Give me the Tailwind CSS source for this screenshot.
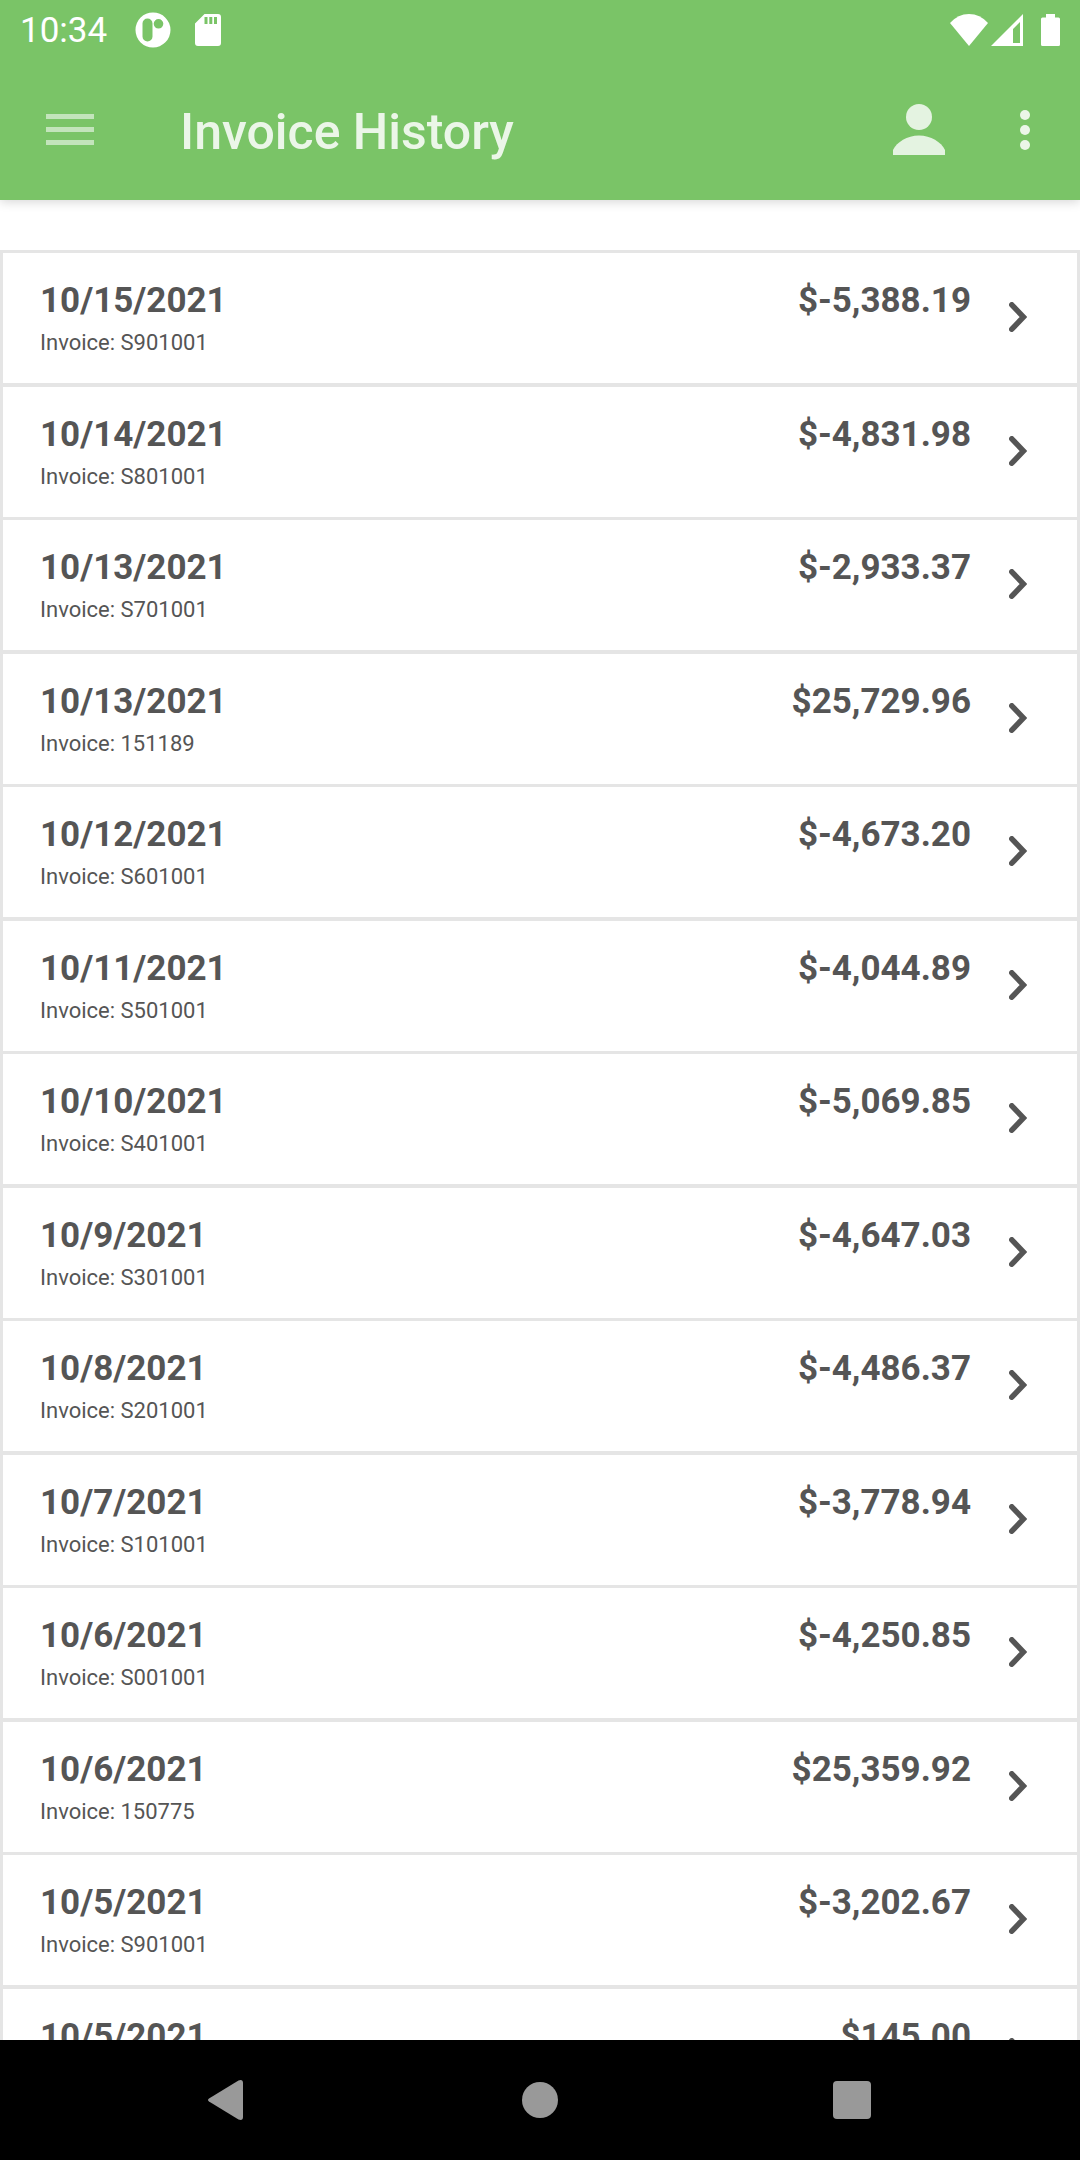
<!DOCTYPE html>
<html lang="en">
<head>
  <meta charset="UTF-8">
  <meta name="viewport" content="width=device-width, initial-scale=1">
  <title>Invoice History</title>

  <!-- Tailwind CSS -->
  <script src="https://cdn.jsdelivr.net/npm/@tailwindcss/browser@4"></script>
</head>
<body class="bg-white text-[#555555] font-[Roboto,sans-serif] h-screen flex flex-col overflow-hidden">

  <header class="relative z-10 bg-[#7ac467] shadow-[0_2px_10px_rgba(0,0,0,0.16)]">
    <!-- Status Bar -->
    <div class="h-[60px] px-5 flex items-center justify-between text-white">
      <div class="flex items-center">
        <span class="pt-0.5 text-[35px] leading-[42px]">10:34</span>
        <svg class="w-9 h-9 ml-7" viewBox="0 0 36 36" fill="currentColor" aria-hidden="true">
          <path fill-rule="evenodd" d="M18 .5a17.500 17.500 0 1 0 0 35a17.500 17.500 0 0 0 0-35zM12.500 6.500a5 5 0 0 1 5 5v13a5 5 0 0 1-10 0v-13a5 5 0 0 1 5-5zM23.500 7a4.800 4.800 0 1 1 0 9.600a4.800 4.800 0 0 1 0-9.600z"/>
        </svg>
        <svg class="w-[26px] h-8 ml-6" viewBox="0 0 26 32" fill="currentColor" aria-hidden="true">
          <path fill-rule="evenodd" d="M9.500 0H23a3 3 0 0 1 3 3v26a3 3 0 0 1-3 3H3a3 3 0 0 1-3-3V9.500zM9.500 3v7h3V3zM14.300 3v7h3V3zM19 3v7h3V3z"/>
        </svg>
      </div>
      <div class="flex items-center">
        <svg class="w-[38px] h-8" viewBox="0 0 38 32" fill="currentColor" aria-hidden="true">
          <path d="M19 32L0 9Q8 0 19 0T38 9z"/>
        </svg>
        <svg class="w-8 h-8 ml-[3px]" viewBox="0 0 32 32" fill="currentColor" aria-hidden="true">
          <path fill-rule="evenodd" d="M32 0v32H0zM29 8l-7 7v14h7z"/>
        </svg>
        <svg class="w-[19px] h-8 ml-[18px]" viewBox="0 0 19 32" fill="currentColor" aria-hidden="true">
          <path d="M5 0h9v3.500h3.500A1.500 1.500 0 0 1 19 5v25.500a1.500 1.500 0 0 1-1.500 1.500h-16A1.500 1.500 0 0 1 0 30.500V5a1.500 1.500 0 0 1 1.500-1.500H5z"/>
        </svg>
      </div>
    </div>

    <!-- App Bar -->
    <div class="h-[140px] pl-[46px] pr-[42px] flex items-center">
      <button type="button" aria-label="Menu" class="text-white/55">
        <svg class="w-12 h-8" viewBox="0 0 48 32" fill="currentColor">
          <path d="M0 0h48v5H0zM0 13h48v5H0zM0 26h48v5H0z"/>
        </svg>
      </button>
      <h1 class="flex-1 ml-[86px] pt-1 text-[50px] leading-[60px] font-medium text-white/85">Invoice History</h1>
      <button type="button" aria-label="Account" class="text-white/80">
        <svg class="w-[52px] h-[52px]" viewBox="0 0 52 52" fill="currentColor">
          <circle cx="26" cy="13" r="13"/>
          <path d="M0 51v-5C4 38 14 31.500 26 31.500S48 38 52 46v5z"/>
        </svg>
      </button>
      <button type="button" aria-label="More options" class="ml-[67px] text-white/85">
        <svg class="w-[26px] h-10" viewBox="0 0 26 40" fill="currentColor">
          <circle cx="13" cy="5" r="5"/>
          <circle cx="13" cy="20" r="5"/>
          <circle cx="13" cy="35" r="5"/>
        </svg>
      </button>
    </div>
  </header>

  <!-- Invoice List -->
  <main class="flex-1 min-h-0 overflow-hidden pt-[50px]">
    <ul id="invoice-list" class="border-t-3 border-x-3 border-[#e5e5e5]"></ul>
  </main>

  <!-- System Navigation -->
  <nav class="h-[120px] shrink-0 px-[72px] bg-black text-[#999999] grid grid-cols-3 place-items-center">
    <button type="button" aria-label="Back">
      <svg class="w-14 h-10" viewBox="0 0 56 40" fill="currentColor">
        <path d="M9 18.500L38.500 .5Q43 -1 43 3V37Q43 41 38.500 39.500L9 21.500Q7 20 9 18.500z"/>
      </svg>
    </button>
    <button type="button" aria-label="Home">
      <svg class="w-14 h-10" viewBox="0 0 56 40" fill="currentColor">
        <circle cx="28" cy="20" r="18"/>
      </svg>
    </button>
    <button type="button" aria-label="Recent apps">
      <svg class="w-14 h-10" viewBox="0 0 56 40" fill="currentColor">
        <rect x="9" y="1" width="38" height="38" rx="4"/>
      </svg>
    </button>
  </nav>

  <script>
    const invoices = [
      { date: '10/15/2021', number: 'S901001', amount: '$-5,388.19' },
      { date: '10/14/2021', number: 'S801001', amount: '$-4,831.98' },
      { date: '10/13/2021', number: 'S701001', amount: '$-2,933.37' },
      { date: '10/13/2021', number: '151189', amount: '$25,729.96' },
      { date: '10/12/2021', number: 'S601001', amount: '$-4,673.20' },
      { date: '10/11/2021', number: 'S501001', amount: '$-4,044.89' },
      { date: '10/10/2021', number: 'S401001', amount: '$-5,069.85' },
      { date: '10/9/2021', number: 'S301001', amount: '$-4,647.03' },
      { date: '10/8/2021', number: 'S201001', amount: '$-4,486.37' },
      { date: '10/7/2021', number: 'S101001', amount: '$-3,778.94' },
      { date: '10/6/2021', number: 'S001001', amount: '$-4,250.85' },
      { date: '10/6/2021', number: '150775', amount: '$25,359.92' },
      { date: '10/5/2021', number: 'S901001', amount: '$-3,202.67' },
      { date: '10/5/2021', amount: '$145.00' }
    ];

    // Render one row per invoice
    document.getElementById('invoice-list').innerHTML = invoices.map((invoice) => `
      <li class="border-[#e5e5e5] odd:border-b-4 even:border-b-3">
        <a href="#" class="h-[130px] pl-[37px] pr-[50px] pt-[27px] flex items-start">
          <div class="flex-1">
            <p class="text-[35px] leading-[42px] font-bold">${invoice.date}</p>
            ${invoice.number ? `<p class="text-[22px] leading-[42px]">Invoice: ${invoice.number}</p>` : ''}
          </div>
          <p class="text-[35px] leading-[42px] font-bold">${invoice.amount}</p>
          <svg class="w-[18px] h-[30px] ml-[38px] mt-[22px]" viewBox="0 0 18 30" fill="none" stroke="currentColor" stroke-width="5.5" stroke-linecap="round" aria-hidden="true">
            <path d="M2.800 2.800L14.500 15L2.800 27.200"/>
          </svg>
        </a>
      </li>
    `).join('');
  </script>

</body>
</html>
